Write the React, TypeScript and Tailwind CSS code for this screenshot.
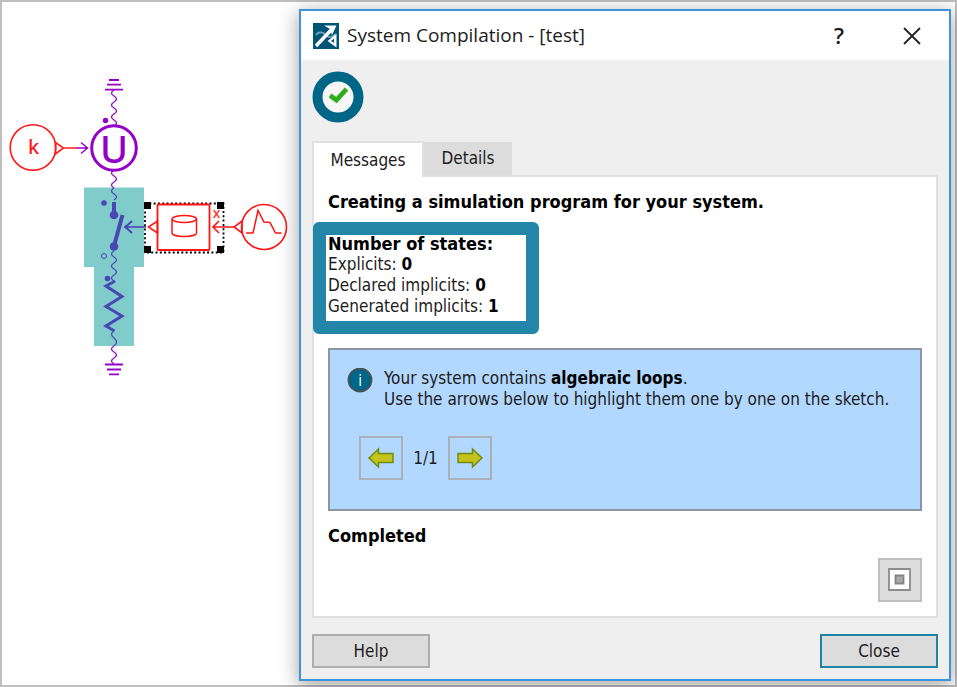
import React from 'react';

const wave = (y: number, count: number) =>
  `M114 ${y}` + Array.from({ length: count }, (_, i) => `q${i % 2 ? 5 : -5} 3 0 6`).join('');

const Sketch = () => (
  <svg
    className="block w-full"
    viewBox="2 2 297 440"
    fill="none"
    fontFamily="'Noto Sans', sans-serif"
    role="img"
    aria-label="System sketch"
  >
    {/* Highlighted loop */}
    <path d="M84 187.500h60V267H134v79H94v-79H84z" fill="#80cccb" />

    {/* Voltage source */}
    <g stroke="#9400c8" strokeWidth="1.800">
      <path d="M109 80h10M107 84.700h14M105 89.700h18" />
      <path d={wave(90, 6)} strokeWidth="1.300" />
      <circle cx="114" cy="148" r="22.300" strokeWidth="3" fill="#fff" />
      <path d={wave(170, 3)} strokeWidth="1.300" />
      <path d="M76 148h12M81 142.500l6.500 5.500-6.500 5.500" strokeWidth="1.400" />
      <path d="M105 364.500h18M107 369.500h14M109 374.300h10" />
      <path d={wave(346, 3)} strokeWidth="1.300" />
    </g>
    <circle cx="105.500" cy="120.500" r="2.700" fill="#9400c8" />
    <text x="114" y="162.500" textAnchor="middle" fontSize="38" fontWeight="500" fill="#9400c8">U</text>

    {/* Constant */}
    <g stroke="#ff1a1a" strokeWidth="1.600">
      <circle cx="33" cy="147.500" r="22.800" />
      <path d="M55.500 142.500v11.500l8-6zM63.500 148H77" />
    </g>
    <text x="33.500" y="154" textAnchor="middle" fontSize="20" fontWeight="500" fill="#ff1a1a">k</text>

    {/* Switch and resistor */}
    <g stroke="#4a46b4" strokeWidth="1.300">
      <path d={wave(188, 2)} />
      <path d="M114 202v12" strokeWidth="4" />
      <path d="M122.500 215L114 246" strokeWidth="4" />
      <circle cx="104" cy="256" r="2.500" strokeWidth="1" />
      <path d={wave(251, 5)} />
      <path d="M115 281l-9 5 16 10.500-16 10 16 9.500-16 10 8.500 5" strokeWidth="3" />
      <path d="M114 331q-5 3 0 7q5 4 0 8" />
      <path d="M146 227h-20" strokeWidth="1.600" />
      <path d="M132 221l-6.500 6 6.500 6" strokeWidth="2" />
    </g>
    <g fill="#4a46b4">
      <circle cx="104" cy="203" r="2.800" />
      <circle cx="114" cy="215" r="4.300" />
      <circle cx="114" cy="246.500" r="4.300" />
      <circle cx="107.500" cy="278.500" r="2.800" />
      <circle cx="126" cy="227" r="1.800" />
    </g>

    {/* Selected block */}
    <rect x="145" y="203.500" width="78.500" height="49" stroke="#000" strokeWidth="1.800" strokeDasharray="2 2.300" />
    <path d="M144 202h7v7h-7zM217 202h7v7h-7zM144 246h7v7h-7zM217 246h7v7h-7z" fill="#000" />
    <g stroke="#ff1414" strokeWidth="1.800">
      <rect x="157.500" y="204.500" width="52" height="45.500" rx="1" fill="#fff" />
      <path d="M157.500 221v12l-9-6z" strokeWidth="1.600" />
      <ellipse cx="184.300" cy="219" rx="12.200" ry="3.500" strokeWidth="1.500" />
      <path d="M172 219v14c0 4.600 24.500 4.600 24.500 0v-14" strokeWidth="1.500" />
      <path d="M219 221l-6 6 6 6M213 227h21" strokeWidth="1.600" />
      <path d="M242 221v12l-8-6z" strokeWidth="1.600" />
      <circle cx="264" cy="227" r="22.500" strokeWidth="1.600" />
      <path d="M246 233h7l5-22.500 6 11.500 6 .5 5.500 10.500h6" strokeWidth="1.500" />
    </g>
    <text x="216.500" y="218" textAnchor="middle" fontSize="14" fontWeight="500" fill="#ff3030">x</text>
  </svg>
);

const AppLogo = () => (
  <svg className="h-[26px] w-[26px]" viewBox="0 0 26 26" fill="none" aria-hidden="true">
    <path d="M0 0h26v26H0z" fill="#005577" />
    <path d="M3 12c3-4 7-3 10 0s6 3 10-1" stroke="#6fa3b8" strokeWidth="2" />
    <path d="M3 23L20 5" stroke="#fff" strokeWidth="3.500" />
    <path d="M11 2.500h12.500L19 12l-2-6z" fill="#fff" />
    <path d="M23.500 11v13.500l-9-6.500z" fill="#fff" />
    <path d="M21 15.500v4.500l-3-2z" fill="#005577" />
  </svg>
);

const CompiledIcon = () => (
  <svg className="h-[52px] w-[52px]" viewBox="0 0 52 52" fill="none" role="img" aria-label="Compilation succeeded">
    <circle cx="26" cy="26" r="20.500" stroke="#006687" strokeWidth="10" fill="#f6f6f6" />
    <path d="M18 24.500l6.500 4.500L34.500 18" stroke="#2fae1c" strokeWidth="4.800" />
  </svg>
);

const LoopArrow = ({ flip = false }: { flip?: boolean }) => (
  <svg className={flip ? 'h-6 w-7 rotate-180' : 'h-6 w-7'} viewBox="0 0 28 24" aria-hidden="true">
    <path d="M2 12L11.500 3v4.500H26v9H11.500V21z" fill="#c3c31c" stroke="#6f8a14" strokeWidth="1.500" />
  </svg>
);

const states = [
  { label: 'Explicits', value: 0 },
  { label: 'Declared implicits', value: 0 },
  { label: 'Generated implicits', value: 1 },
];

const App = () => {
  return (
    <div className="flex min-h-screen border-2 border-[#bfbfbf] bg-white font-['DejaVu_Sans_Condensed','Noto_Sans',sans-serif] text-[17px] leading-[21px] text-[#1c1c1c]">
      <div className="w-[297px] shrink-0">
        <Sketch />
      </div>

      <section
        className="mt-[7px] mr-1 mb-[3px] flex flex-1 flex-col self-start border-2 border-[#3f93dc] bg-[#efefef] shadow-[0_4px_18px_1px_rgba(0,0,0,0.35)]"
        aria-label="System Compilation"
      >
        {/* Title bar */}
        <header className="flex h-[49px] items-center bg-white pr-[25px] pl-3">
          <AppLogo />
          <h1 className="ml-2 font-['Open_Sans',sans-serif] text-[19px]">System Compilation - [test]</h1>
          <button className="ml-auto w-8 font-['Open_Sans',sans-serif] text-[22px] font-semibold" aria-label="Help">?</button>
          <button className="ml-[45px] flex w-6 justify-center" aria-label="Close window">
            <svg className="h-5 w-5" viewBox="0 0 20 20" stroke="#222" strokeWidth="1.800" aria-hidden="true">
              <path d="M2 2l16 16M18 2L2 18" />
            </svg>
          </button>
        </header>

        <div className="px-[11px] pt-[11px] pb-[11px]">
          <CompiledIcon />

          {/* Tabs */}
          <div className="mt-[18px] flex h-[34px] items-start" role="tablist">
            <button
              className="relative z-10 h-9 w-[112px] border-2 border-b-0 border-[#e0e0e0] bg-white"
              role="tab"
              aria-selected="true"
            >
              Messages
            </button>
            <button className="mt-px h-[33px] w-[88px] bg-[#dcdcdc]" role="tab" aria-selected="false">
              Details
            </button>
          </div>

          <div className="border-2 border-[#e0e0e0] bg-white p-[14px]" role="tabpanel">
            <p className="text-[18px] leading-[21px] font-bold text-black">Creating a simulation program for your system.</p>

            <div className="relative mt-[21px] w-[211px]">
              <h2 className="text-[18px] leading-[21px] font-bold text-black">Number of states:</h2>
              {states.map((state) => (
                <p key={state.label}>
                  {state.label}: <b className="text-black">{state.value}</b>
                </p>
              ))}
              <div className="pointer-events-none absolute -top-[11px] right-0 -bottom-[17px] -left-[15px] rounded-md border-[13px] border-[#2386a8]" />
            </div>

            <div className="mt-[31px] border-2 border-[#8a96a3] bg-[#b2d8ff] pt-[18px] pr-4 pb-[29px] pl-[17px]">
              <div className="flex items-start gap-[11px]">
                <svg className="h-[26px] w-[26px] shrink-0" viewBox="0 0 26 26" aria-hidden="true">
                  <circle cx="13" cy="12" r="11.500" fill="#006687" stroke="#4b4f52" strokeWidth="1.800" />
                  <text x="13" y="17.500" textAnchor="middle" fontSize="15" fill="#fff">i</text>
                </svg>
                <div>
                  <p>Your system contains <b className="text-black">algebraic loops</b>.</p>
                  <p>Use the arrows below to highlight them one by one on the sketch.</p>
                </div>
              </div>
              <div className="mt-[26px] ml-3 flex items-center gap-2">
                <button className="flex h-11 w-11 items-center justify-center border-2 border-[#a9b0b8]" aria-label="Previous loop">
                  <LoopArrow />
                </button>
                <span className="w-[29px] text-center">1/1</span>
                <button className="flex h-11 w-11 items-center justify-center border-2 border-[#a9b0b8]" aria-label="Next loop">
                  <LoopArrow flip />
                </button>
              </div>
            </div>

            <p className="mt-[14px] text-[18px] leading-[21px] font-bold text-black">Completed</p>
            <div className="mt-3 flex justify-end">
              <button className="flex h-11 w-11 items-center justify-center border-2 border-[#bebebe] bg-[#dcdcdc]" aria-label="Stop">
                <svg className="h-6 w-6" viewBox="0 0 24 24" aria-hidden="true">
                  <path d="M1 1h21v21H1z" fill="#fff" stroke="#8c8c8c" strokeWidth="1.800" />
                  <path d="M7.500 7.500h8v8h-8z" fill="#a8a8a8" stroke="#858585" strokeWidth="1.800" />
                </svg>
              </button>
            </div>
          </div>

          <div className="mt-4 flex justify-between">
            <button className="h-[34px] w-[118px] border-2 border-[#adadad] bg-[#dcdcdc]">Help</button>
            <button className="h-[34px] w-[118px] border-2 border-[#1f83a3] bg-[#dcdcdc]">Close</button>
          </div>
        </div>
      </section>
    </div>
  );
};

export default App;
